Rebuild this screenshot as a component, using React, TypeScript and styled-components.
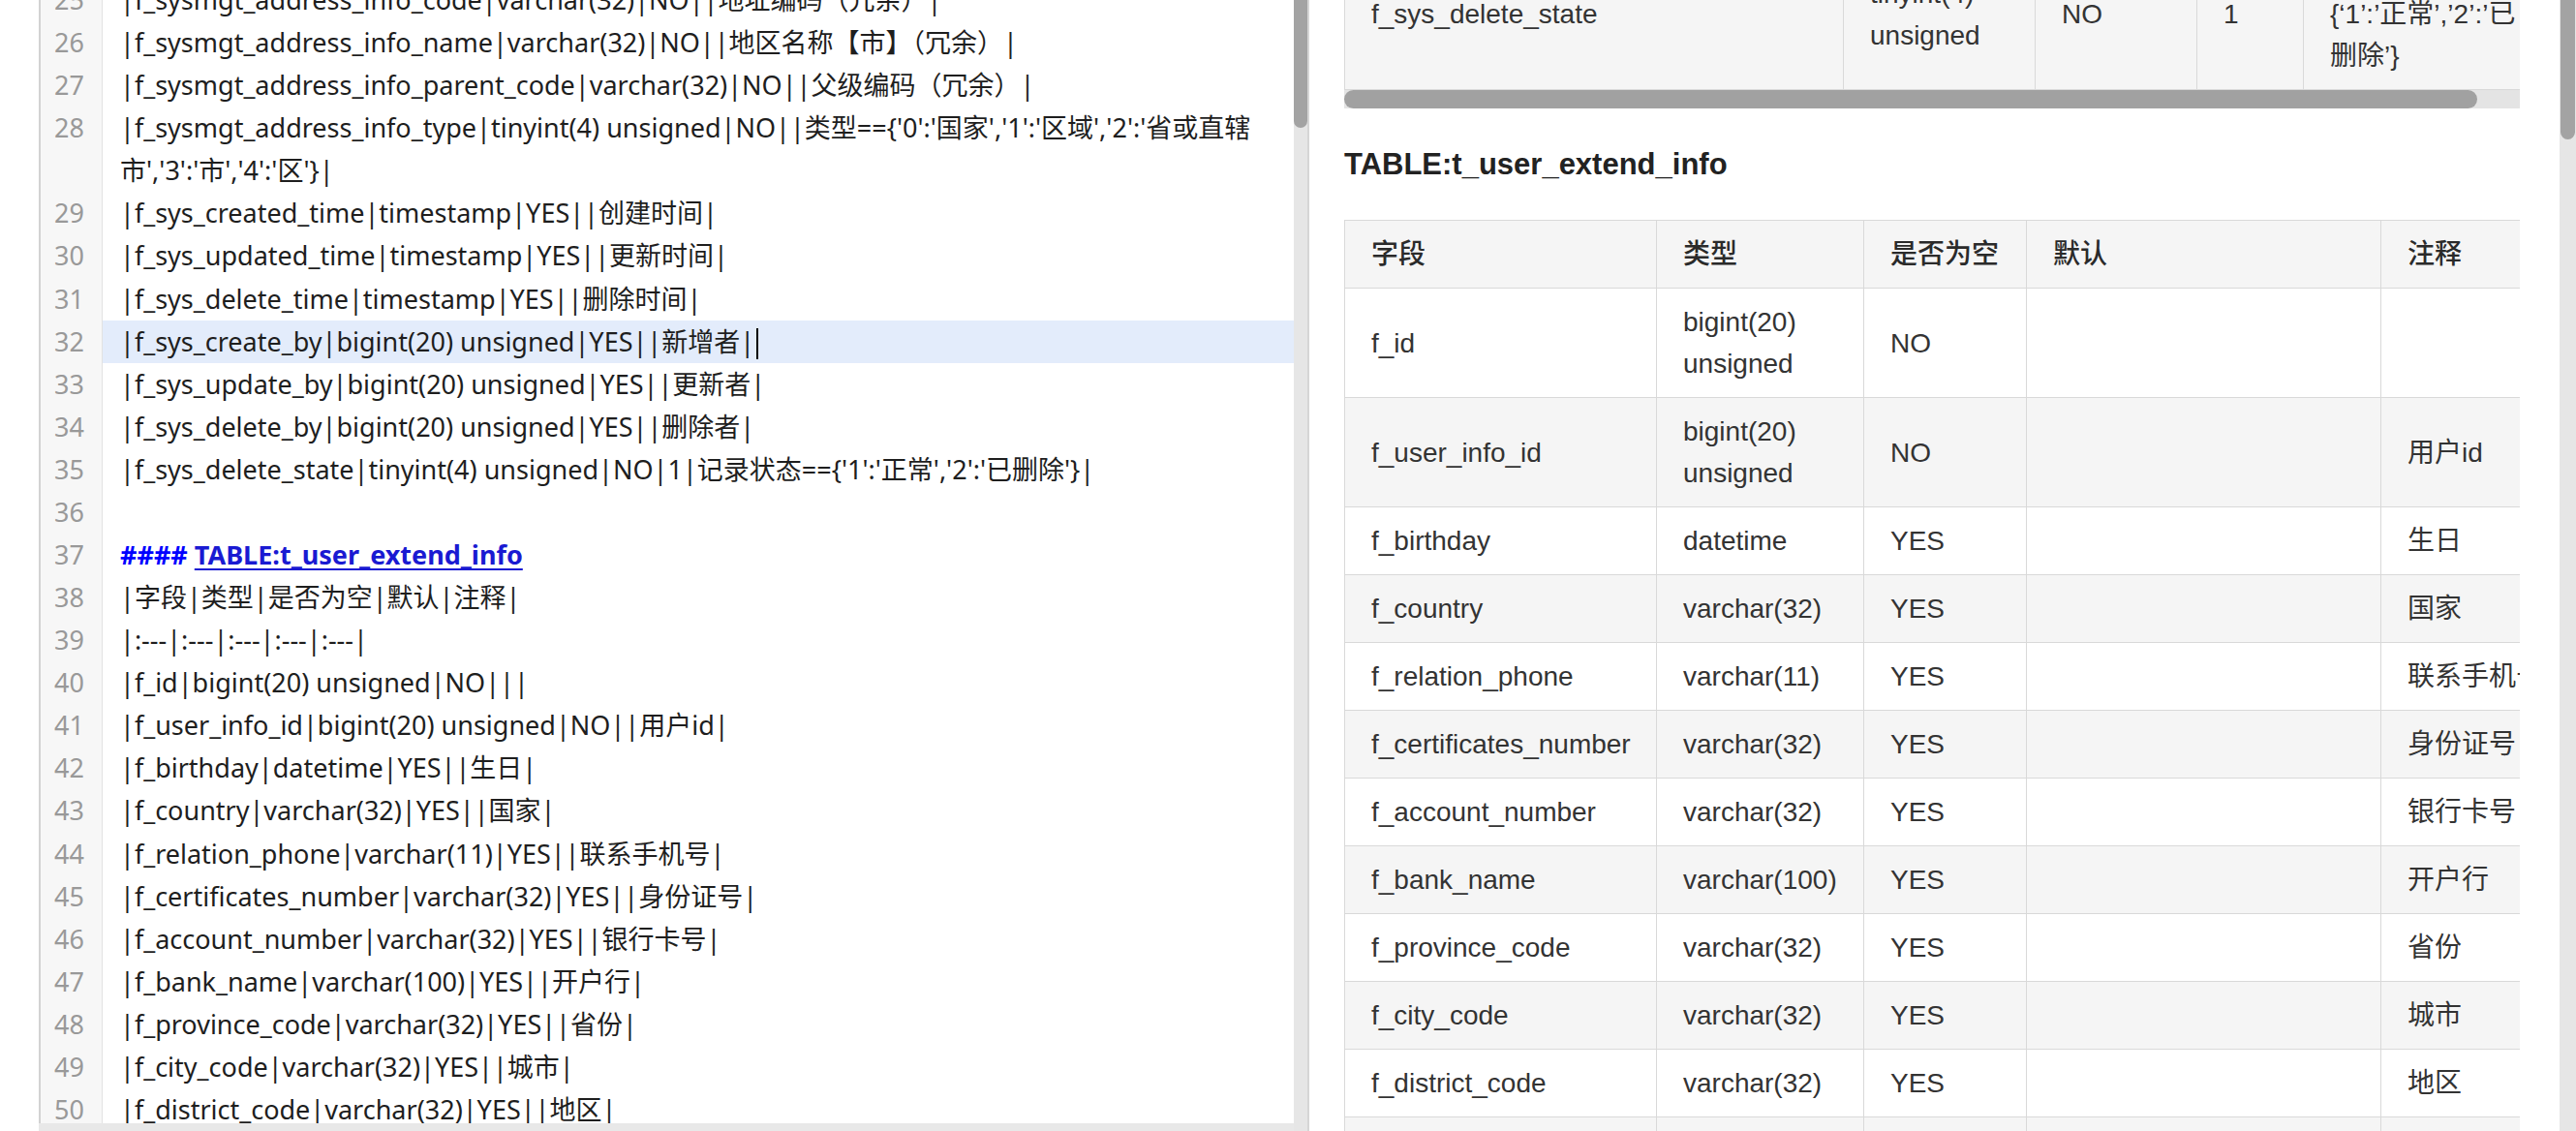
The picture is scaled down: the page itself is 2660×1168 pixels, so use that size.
import React from 'react';
import styled, { createGlobalStyle } from 'styled-components';

const GlobalStyle = createGlobalStyle`
  html, body {
    margin: 0;
    padding: 0;
    background: #ffffff;
  }
  body {
    width: 2660px;
    height: 1168px;
    overflow: hidden;
  }
`;

// Layout
const Page = styled.div`
  display: flex;
  width: 2660px;
  height: 1168px;
  overflow: hidden;
  background: #ffffff;
`;

// Editor (left pane)
const EditorPane = styled.div`
  display: flex;
  width: 1352px;
  flex-shrink: 0;
  height: 100%;
`;

const EditorMain = styled.div`
  flex: 1;
  min-width: 0;
  display: flex;
  flex-direction: column;
  margin-left: 40px;
`;

const CodeViewport = styled.div`
  flex: 1;
  min-height: 0;
  overflow: hidden;
  font-family: 'Noto Sans', 'Noto Sans CJK SC', sans-serif;
  font-size: 27px;
  color: #1e1e1e;
`;

const Lines = styled.div`
  margin-top: -22px;
`;

const LineRow = styled.div`
  display: flex;
  height: 44.08px;
  line-height: 44.08px;
`;

const LineNumber = styled.div`
  box-sizing: border-box;
  width: 66px;
  flex-shrink: 0;
  padding-right: 18px;
  text-align: right;
  color: #999999;
  background: #f7f7f7;
  border-left: 2px solid #d2d2d2;
  border-right: 1px solid #e2e2e2;
`;

const CodeText = styled.div<{ $active?: boolean }>`
  flex: 1;
  padding-left: 18px;
  white-space: pre;
  overflow: hidden;
  background: ${({ $active }) => ($active ? '#e3ecfb' : 'transparent')};
`;

const HeadingHash = styled.span`
  color: #0000ff;
  font-weight: 700;
`;

const HeadingLink = styled.span`
  color: #1a1ad2;
  font-weight: 700;
  text-decoration: underline;
  text-underline-offset: 4px;
`;

const Cursor = styled.span`
  display: inline-block;
  width: 2px;
  height: 32px;
  margin-left: 2px;
  background: #000000;
  vertical-align: middle;
`;

const EditorHScroll = styled.div`
  height: 8px;
  flex-shrink: 0;
  background: #e8e8e8;
`;

const VScroll = styled.div<{ $width: number }>`
  width: ${({ $width }) => $width}px;
  flex-shrink: 0;
  height: 100%;
  background: #e6e6e6;
  display: flex;
  flex-direction: column;
`;

const VThumb = styled.div<{ $height: number; $inset: number }>`
  height: ${({ $height }) => $height}px;
  margin: 0 ${({ $inset }) => $inset}px;
  background: #a3a3a3;
  border-radius: 0 0 8px 8px;
`;

const PaneDivider = styled.div`
  width: 2px;
  flex-shrink: 0;
  background: #d6d6d6;
`;

// Preview (right pane)
const PreviewPane = styled.div`
  flex: 1;
  min-width: 0;
  display: flex;
  height: 100%;
`;

const PreviewBody = styled.div`
  flex: 1;
  min-width: 0;
  overflow: hidden;
  padding: 0 41px 0 36px;
  font-family: 'Liberation Sans', Arial, 'Noto Sans CJK SC', sans-serif;
  color: #333333;
`;

const TableClip = styled.div<{ $offset?: number }>`
  overflow: hidden;
  margin-top: ${({ $offset }) => $offset ?? 0}px;
`;

const DocTable = styled.table<{ $width: number }>`
  border-collapse: collapse;
  table-layout: fixed;
  width: ${({ $width }) => $width}px;
  font-size: 28px;
  line-height: 43px;
`;

const Row = styled.tr<{ $shade?: boolean }>`
  background: ${({ $shade }) => ($shade ? '#f5f5f5' : '#ffffff')};
`;

const HeadCell = styled.th`
  border: 1px solid #d9d9d9;
  padding: 13px 27px;
  text-align: left;
  font-weight: 500;
  color: #2a2a2a;
  vertical-align: middle;
`;

const Cell = styled.td`
  border: 1px solid #d9d9d9;
  padding: 13px 27px;
  text-align: left;
  vertical-align: middle;
  white-space: normal;
`;

const HScrollTrack = styled.div`
  height: 19px;
  background: #e4e4e4;
`;

const HScrollThumb = styled.div<{ $width: number }>`
  width: ${({ $width }) => $width}px;
  height: 100%;
  background: #a1a1a1;
  border-radius: 10px;
`;

const SectionTitle = styled.h4`
  margin: 38px 0 37px;
  font-size: 31px;
  line-height: 40px;
  font-weight: 700;
  color: #222222;
`;

// Data
type CodeLine = {
  n?: number;
  text: string;
  heading?: string;
  active?: boolean;
};

const codeLines: CodeLine[] = [
  { n: 25, text: '|f_sysmgt_address_info_code|varchar(32)|NO||地址编码（冗余）|' },
  { n: 26, text: '|f_sysmgt_address_info_name|varchar(32)|NO||地区名称【市】（冗余）|' },
  { n: 27, text: '|f_sysmgt_address_info_parent_code|varchar(32)|NO||父级编码（冗余）|' },
  { n: 28, text: "|f_sysmgt_address_info_type|tinyint(4) unsigned|NO||类型=={'0':'国家','1':'区域','2':'省或直辖" },
  { text: "市','3':'市','4':'区'}|" },
  { n: 29, text: '|f_sys_created_time|timestamp|YES||创建时间|' },
  { n: 30, text: '|f_sys_updated_time|timestamp|YES||更新时间|' },
  { n: 31, text: '|f_sys_delete_time|timestamp|YES||删除时间|' },
  { n: 32, text: '|f_sys_create_by|bigint(20) unsigned|YES||新增者|', active: true },
  { n: 33, text: '|f_sys_update_by|bigint(20) unsigned|YES||更新者|' },
  { n: 34, text: '|f_sys_delete_by|bigint(20) unsigned|YES||删除者|' },
  { n: 35, text: "|f_sys_delete_state|tinyint(4) unsigned|NO|1|记录状态=={'1':'正常','2':'已删除'}|" },
  { n: 36, text: '' },
  { n: 37, text: '', heading: 'TABLE:t_user_extend_info' },
  { n: 38, text: '|字段|类型|是否为空|默认|注释|' },
  { n: 39, text: '|:---|:---|:---|:---|:---|' },
  { n: 40, text: '|f_id|bigint(20) unsigned|NO|||' },
  { n: 41, text: '|f_user_info_id|bigint(20) unsigned|NO||用户id|' },
  { n: 42, text: '|f_birthday|datetime|YES||生日|' },
  { n: 43, text: '|f_country|varchar(32)|YES||国家|' },
  { n: 44, text: '|f_relation_phone|varchar(11)|YES||联系手机号|' },
  { n: 45, text: '|f_certificates_number|varchar(32)|YES||身份证号|' },
  { n: 46, text: '|f_account_number|varchar(32)|YES||银行卡号|' },
  { n: 47, text: '|f_bank_name|varchar(100)|YES||开户行|' },
  { n: 48, text: '|f_province_code|varchar(32)|YES||省份|' },
  { n: 49, text: '|f_city_code|varchar(32)|YES||城市|' },
  { n: 50, text: '|f_district_code|varchar(32)|YES||地区|' },
];

const extendHeaders = ['字段', '类型', '是否为空', '默认', '注释'];
const extendCols = [322, 214, 168, 366, 220];

const extendRows: string[][] = [
  ['f_id', 'bigint(20) unsigned', 'NO', '', ''],
  ['f_user_info_id', 'bigint(20) unsigned', 'NO', '', '用户id'],
  ['f_birthday', 'datetime', 'YES', '', '生日'],
  ['f_country', 'varchar(32)', 'YES', '', '国家'],
  ['f_relation_phone', 'varchar(11)', 'YES', '', '联系手机号'],
  ['f_certificates_number', 'varchar(32)', 'YES', '', '身份证号'],
  ['f_account_number', 'varchar(32)', 'YES', '', '银行卡号'],
  ['f_bank_name', 'varchar(100)', 'YES', '', '开户行'],
  ['f_province_code', 'varchar(32)', 'YES', '', '省份'],
  ['f_city_code', 'varchar(32)', 'YES', '', '城市'],
  ['f_district_code', 'varchar(32)', 'YES', '', '地区'],
  ['f_address', 'varchar(255)', 'YES', '', '详细地址'],
];

const prevCols = [515, 198, 167, 110, 260];

const sum = (xs: number[]) => xs.reduce((a, b) => a + b, 0);

const Editor: React.FC = () => (
  <EditorPane>
    <EditorMain>
      <CodeViewport>
        <Lines>
          {codeLines.map((line, i) => (
            <LineRow key={i}>
              <LineNumber>{line.n ?? ''}</LineNumber>
              <CodeText $active={line.active}>
                {line.heading ? (
                  <>
                    <HeadingHash>#### </HeadingHash>
                    <HeadingLink>{line.heading}</HeadingLink>
                  </>
                ) : (
                  line.text
                )}
                {line.active && <Cursor />}
              </CodeText>
            </LineRow>
          ))}
        </Lines>
      </CodeViewport>
      <EditorHScroll />
    </EditorMain>
    <VScroll $width={14}>
      <VThumb $height={132} $inset={0} />
    </VScroll>
    <PaneDivider />
  </EditorPane>
);

const Preview: React.FC = () => (
  <PreviewPane>
    <PreviewBody>
      <TableClip $offset={-64}>
        <DocTable $width={sum(prevCols)}>
          <colgroup>
            {prevCols.map((w, i) => (
              <col key={i} style={{ width: w }} />
            ))}
          </colgroup>
          <tbody>
            <Row $shade>
              <Cell>f_sys_delete_state</Cell>
              <Cell>tinyint(4) unsigned</Cell>
              <Cell>NO</Cell>
              <Cell>1</Cell>
              <Cell>
                记录状态==
                <br />
                {'{‘1’:’正常’,’2’:’已'}
                <br />
                {'删除’}'}
              </Cell>
            </Row>
          </tbody>
        </DocTable>
      </TableClip>
      <HScrollTrack>
        <HScrollThumb $width={1170} />
      </HScrollTrack>

      <SectionTitle>TABLE:t_user_extend_info</SectionTitle>

      <TableClip>
        <DocTable $width={sum(extendCols)}>
          <colgroup>
            {extendCols.map((w, i) => (
              <col key={i} style={{ width: w }} />
            ))}
          </colgroup>
          <thead>
            <Row $shade>
              {extendHeaders.map((h) => (
                <HeadCell key={h}>{h}</HeadCell>
              ))}
            </Row>
          </thead>
          <tbody>
            {extendRows.map((r, i) => (
              <Row key={r[0]} $shade={i % 2 === 1}>
                {r.map((c, j) => (
                  <Cell key={j}>{c}</Cell>
                ))}
              </Row>
            ))}
          </tbody>
        </DocTable>
      </TableClip>
    </PreviewBody>
    <VScroll $width={17}>
      <VThumb $height={144} $inset={1} />
    </VScroll>
  </PreviewPane>
);

export default function App() {
  return (
    <>
      <GlobalStyle />
      <Page>
        <Editor />
        <Preview />
      </Page>
    </>
  );
}
